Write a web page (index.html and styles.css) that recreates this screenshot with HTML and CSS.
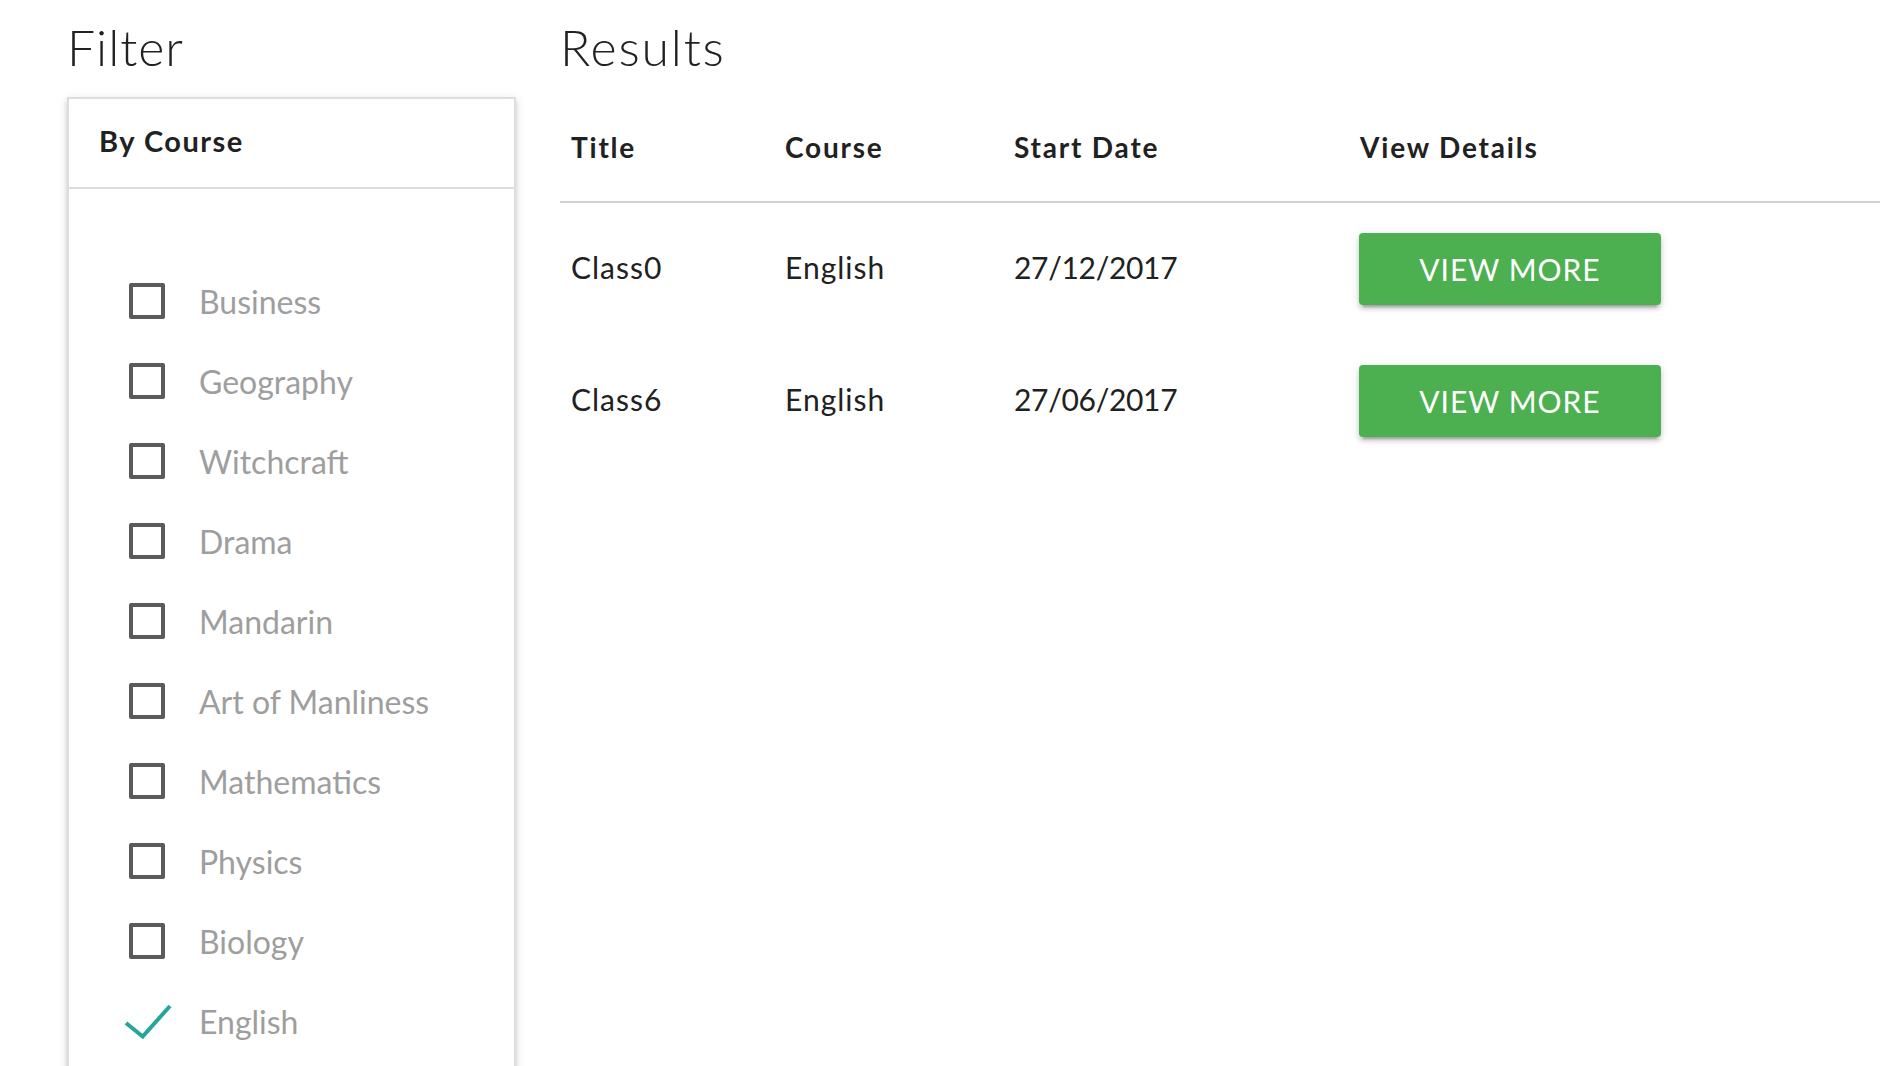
FILE: index.html
```html
<!DOCTYPE html>
<html lang="en">
<head>
<meta charset="utf-8">
<title>Classes</title>
<link rel="stylesheet" href="styles.css">
</head>
<body>
<div class="page">
  <aside class="filter-col">
    <h4 class="section-title">Filter</h4>
    <div class="card">
      <div class="card-header">By Course</div>
      <ul class="course-list">
        <li class="course"><span class="box"></span><span class="label">Business</span></li>
        <li class="course"><span class="box"></span><span class="label">Geography</span></li>
        <li class="course"><span class="box"></span><span class="label">Witchcraft</span></li>
        <li class="course"><span class="box"></span><span class="label">Drama</span></li>
        <li class="course"><span class="box"></span><span class="label">Mandarin</span></li>
        <li class="course"><span class="box"></span><span class="label">Art of Manliness</span></li>
        <li class="course"><span class="box"></span><span class="label">Mathematics</span></li>
        <li class="course"><span class="box"></span><span class="label">Physics</span></li>
        <li class="course"><span class="box"></span><span class="label">Biology</span></li>
        <li class="course"><span class="box checked"><svg class="tick" viewBox="0 0 36 36" width="36" height="36"><polyline points="-3,20 13.7,33.5 41,3" /></svg></span><span class="label">English</span></li>
      </ul>
    </div>
  </aside>
  <main class="results-col">
    <h4 class="section-title">Results</h4>
    <table class="results">
      <thead>
        <tr>
          <th class="c-title">Title</th>
          <th class="c-course">Course</th>
          <th class="c-date">Start Date</th>
          <th class="c-view">View Details</th>
        </tr>
      </thead>
      <tbody>
        <tr>
          <td>Class0</td>
          <td>English</td>
          <td class="date">27/12/2017</td>
          <td class="action"><a class="btn" href="#">View more</a></td>
        </tr>
        <tr>
          <td>Class6</td>
          <td>English</td>
          <td class="date">27/06/2017</td>
          <td class="action"><a class="btn" href="#">View more</a></td>
        </tr>
      </tbody>
    </table>
  </main>
</div>
</body>
</html>
```

FILE: styles.css
```css
html, body {
  margin: 0;
  padding: 0;
  overflow: hidden;
  background: #fff;
}

body {
  font-family: "Lato", "Open Sans", sans-serif;
  color: #212121;
  width: 1880px;
  height: 1066px;
}

.page {
  display: flex;
  align-items: flex-start;
  padding-left: 67px;
  gap: 44px;
}

.filter-col {
  width: 449px;
  flex: none;
}

.results-col {
  flex: 1;
  min-width: 0;
}

.section-title {
  margin: 0;
  font-weight: 300;
  font-size: 50px;
  line-height: 60px;
  padding-top: 17px;
  letter-spacing: 1px;
  color: #212121;
}

.filter-col .section-title {
  height: 80px;
  padding-left: 0;
}

.results-col .section-title {
  height: 76px;
  padding-left: 0;
  letter-spacing: 1.8px;
}

.card {
  border: 2px solid #ddd;
  background: #fff;
  box-shadow: 0 4px 4px 0 rgba(0,0,0,.14), 0 2px 10px 0 rgba(0,0,0,.12), 0 6px 2px -4px rgba(0,0,0,.2);
  height: 1100px;
}

.card-header {
  height: 90px;
  box-sizing: border-box;
  display: flex;
  align-items: center;
  padding: 0 30px 6px;
  font-weight: 700;
  font-size: 29px;
  letter-spacing: 1.5px;
  color: #212121;
  border-bottom: 2px solid #ddd;
}

.course-list {
  list-style: none;
  margin: 0;
  padding: 90px 0 0 60px;
  display: flex;
  flex-direction: column;
  gap: 30px;
}

.course {
  display: flex;
  align-items: flex-start;
  height: 50px;
}

.box {
  width: 36px;
  height: 36px;
  box-sizing: border-box;
  border: 4px solid #5a5a5a;
  border-radius: 2px;
  margin-top: 4px;
  flex: none;
}

.box.checked {
  border: none;
}

.tick {
  display: block;
  overflow: visible;
}

.tick polyline {
  fill: none;
  stroke: #26a69a;
  stroke-width: 4;
}

.label {
  margin-left: 34px;
  font-size: 32px;
  line-height: 46px;
  color: #9e9e9e;
}

.results {
  width: 100%;
  border-collapse: collapse;
  table-layout: fixed;
}

.results th,
.results td {
  text-align: left;
  padding: 30px 10px 30px 11px;
  vertical-align: middle;
}

.results th {
  font-weight: 700;
  font-size: 28px;
  line-height: 48px;
  letter-spacing: 1.8px;
  color: #212121;
}

.results thead tr {
  border-bottom: 2px solid #d0d0d0;
}

.results td {
  font-size: 30px;
  line-height: 72px;
  height: 72px;
  padding-top: 28px;
  padding-bottom: 32px;
  letter-spacing: 1px;
  color: #212121;
}

.results td.action {
  padding-top: 30px;
  padding-bottom: 30px;
}

.results td.date {
  letter-spacing: -0.3px;
}

.c-title { width: 193px; }
.c-course { width: 208px; }
.c-date { width: 325px; }

.btn {
  display: block;
  width: 302px;
  height: 72px;
  line-height: 72px;
  margin-left: -1px;
  text-align: center;
  background: #4caf50;
  color: #fff;
  text-decoration: none;
  text-transform: uppercase;
  font-size: 30px;
  letter-spacing: 1px;
  border-radius: 4px;
  box-shadow: 0 4px 4px 0 rgba(0,0,0,.14), 0 2px 10px 0 rgba(0,0,0,.12), 0 6px 2px -4px rgba(0,0,0,.2);
}
```
